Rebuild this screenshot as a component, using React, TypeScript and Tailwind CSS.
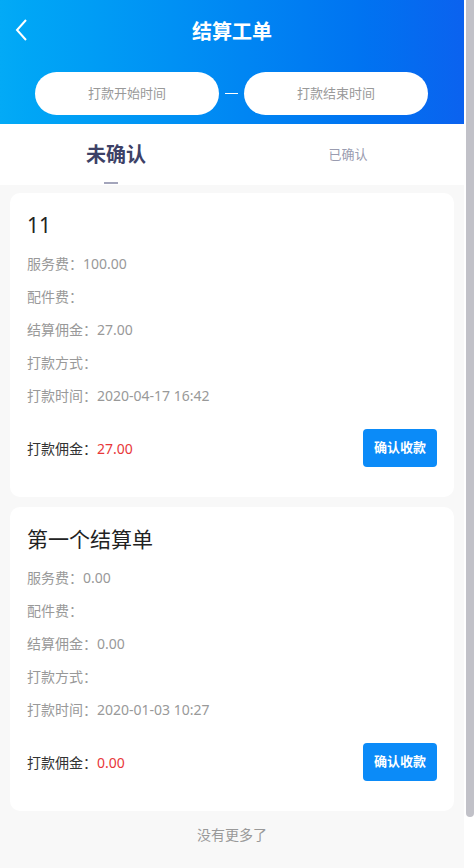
import React from "react";

type Order = {
  id: string;
  title: string;
  service: string;
  parts: string;
  commission: string;
  method: string;
  time: string;
  paid: string;
};

const orders: Order[] = [
  {
    id: "a",
    title: "11",
    service: "100.00",
    parts: "",
    commission: "27.00",
    method: "",
    time: "2020-04-17 16:42",
    paid: "27.00",
  },
  {
    id: "b",
    title: "第一个结算单",
    service: "0.00",
    parts: "",
    commission: "0.00",
    method: "",
    time: "2020-01-03 10:27",
    paid: "0.00",
  },
];

const OrderCard = ({ order }: { order: Order }) => {
  const rows = [
    ["服务费", order.service],
    ["配件费", order.parts],
    ["结算佣金", order.commission],
    ["打款方式", order.method],
    ["打款时间", order.time],
  ];

  return (
    <div className="mx-[10px] rounded-[10px] bg-white px-[17px] pt-[13px] pb-[30px]">
      <div className="h-[38px] text-[21px] leading-[38px] text-[#222]">{order.title}</div>
      <div className="mt-[3px]">
        {rows.map(([label, value]) => (
          <div key={label} className="h-[33px] text-[14px] leading-[33px] text-[#999]">
            {label}：{value}
          </div>
        ))}
      </div>
      <div className="mt-[17px] flex h-[38px] items-center justify-between">
        <div className="text-[14px] text-[#333]">
          打款佣金：<span className="text-[#e8373a]">{order.paid}</span>
        </div>
        <button className="h-[38px] w-[74px] rounded-[4px] bg-[#0b8bf8] text-[13px] font-bold text-white">
          确认收款
        </button>
      </div>
    </div>
  );
};

export default function App() {
  return (
    <div className="flex h-[868px] w-[476px] overflow-hidden bg-[#f8f8f8] font-['Noto_Sans','Noto_Sans_CJK_SC',sans-serif]">
      <div className="w-[464px] shrink-0">
        <div className="h-[124px] bg-gradient-to-r from-[#03aaf6] to-[#0b62ef]">
          <div className="relative flex h-[64px] items-center justify-center">
            <svg
              className="absolute left-[14px] top-[19px]"
              width="16"
              height="22"
              viewBox="0 0 16 22"
              fill="none"
              stroke="white"
              strokeWidth="2"
            >
              <path d="M12 1 L3 11 L12 21" />
            </svg>
            <h1 className="text-[20px] font-bold text-white">结算工单</h1>
          </div>
          <div className="mt-[8px] flex items-center pl-[35px]">
            <div className="flex h-[43px] w-[184px] items-center justify-center rounded-full bg-white text-[13px] text-[#999]">
              打款开始时间
            </div>
            <div className="mx-[6px] h-[1px] w-[13px] bg-white" />
            <div className="flex h-[43px] w-[184px] items-center justify-center rounded-full bg-white text-[13px] text-[#999]">
              打款结束时间
            </div>
          </div>
        </div>

        <div className="flex h-[61px] bg-white">
          <div className="relative flex flex-1 items-center justify-center">
            <span className="text-[20px] font-bold text-[#3d4166]">未确认</span>
            <div className="absolute bottom-[1px] left-[104px] h-[2px] w-[14px] bg-[#a3a5bb]" />
          </div>
          <div className="flex flex-1 items-center justify-center">
            <span className="text-[13px] text-[#9a9cb0]">已确认</span>
          </div>
        </div>

        <div className="mt-[8px] flex flex-col gap-[10px]">
          {orders.map((o) => (
            <OrderCard key={o.id} order={o} />
          ))}
        </div>

        <div className="mt-[12px] text-center text-[14px] leading-[24px] text-[#999]">没有更多了</div>
      </div>

      <div className="w-[12px] shrink-0 bg-white pl-[2px]">
        <div className="h-[817px] w-[8px] rounded-b-full bg-[#c1c1c8]" />
      </div>
    </div>
  );
}
